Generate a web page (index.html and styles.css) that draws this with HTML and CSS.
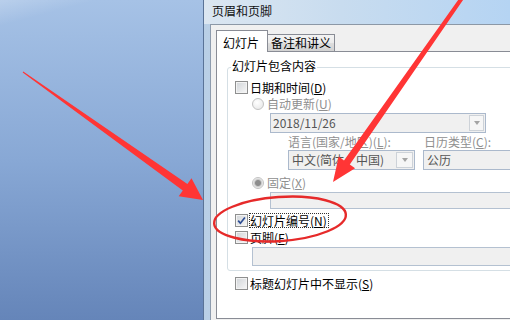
FILE: index.html
```html
<!DOCTYPE html>
<html>
<head>
<meta charset="utf-8">
<title>页眉和页脚</title>
<link rel="stylesheet" href="styles.css">
</head>
<body>
<div class="screen">
  <div class="desk"></div>
  <div class="win">
    <div class="titlebar">页眉和页脚</div>
    <div class="frame">
      <div class="dlg">
        <div class="tabs">
          <div class="tab active">幻灯片</div>
          <div class="tab">备注和讲义</div>
        </div>
        <div class="page">
          <div class="group">
            <span class="cap">幻灯片包含内容</span>
            <div class="row"><span class="cb"></span><span class="lbl">日期和时间(<u>D</u>)</span></div>
            <div class="row ind dis gap1"><span class="rb"></span><span class="lbl rl">自动更新(<u>U</u>)</span></div>
            <div class="combo date gap2"><span class="val">2018/11/26</span><span class="drop"></span></div>
            <div class="grid2 dis gap2 lblrow"><span>语言(国家/地区)(<u>L</u>):</span><span class="c2">日历类型(<u>C</u>):</span></div>
            <div class="grid2 gap1">
              <div class="combo lang"><span class="val">中文(简体，中国)</span><span class="drop wide"></span></div>
              <div class="combo cal"><span class="val">公历</span></div>
            </div>
            <div class="row ind dis gap5"><span class="rb on"></span><span class="lbl rl">固定(<u>X</u>)</span></div>
            <div class="box fixed gap2"></div>
            <div class="row gap4"><span class="cb"><svg width="11" height="11" viewBox="0 0 11 11"><path d="M2.2 5.6 L4.4 8.2 L8.9 2.4" fill="none" stroke="#2d4d94" stroke-width="1.7"/></svg></span><span class="lbl focus">幻灯片编号(<u>N</u>)</span></div>
            <div class="row gap2"><span class="cb"></span><span class="lbl">页脚(<u>F</u>)</span></div>
            <div class="box footer gap2"></div>
          </div>
          <div class="row outer"><span class="cb"></span><span class="lbl">标题幻灯片中不显示(<u>S</u>)</span></div>
        </div>
      </div>
    </div>
  </div>
  <svg class="marks" width="510" height="320" viewBox="0 0 510 320">
    <polygon fill="#ff3535" points="22.7,72.4 182.8,190.6 178.7,196.3 203,200 191.5,178.3 187.4,184.0 23.3,71.6"/>
    <polygon fill="#ff3535" points="463.6,-0.8 349.8,164.4 355.1,168.2 333,182 338.7,156.6 344.0,160.4 460.4,-3.2"/>
    <ellipse cx="280" cy="219" rx="66" ry="22" transform="rotate(-4 280 219)" fill="none" stroke="#e62a2a" stroke-width="2.4"/>
  </svg>
</div>
</body>
</html>
```

FILE: styles.css
```css
* { box-sizing: border-box; margin: 0; padding: 0; }
body {
  margin: 0;
  width: 510px;
  height: 320px;
  overflow: hidden;
  font-family: "Noto Sans CJK SC", "Noto Sans", sans-serif;
  font-size: 12px;
  line-height: 14px;
  color: #000;
}
.screen {
  position: relative;
  display: flex;
  width: 510px;
  height: 320px;
  overflow: hidden;
}
.desk {
  width: 203px;
  flex: none;
  background:
    linear-gradient(165deg, rgba(255,255,255,0.22) 0, rgba(255,255,255,0) 7%),
    linear-gradient(#a6c2e6, #88a8d5 50%, #6585b9);
}
.win {
  flex: 1;
  min-width: 0;
  border-left: 1px solid #5a7397;
  display: flex;
  flex-direction: column;
  overflow: hidden;
}
.titlebar {
  height: 24px;
  flex: none;
  padding: 4px 0 0 8px;
  background: linear-gradient(90deg, #dbe6f1, #c8dcef 45%, #b5d4f3);
  color: #111;
}
.frame {
  flex: 1;
  padding-left: 6px;
  background: linear-gradient(90deg, #b9cfe6, #d6e4f2);
}
.dlg {
  height: 100%;
  width: 400px;
  background: #f0f0f0;
  border-left: 1px solid #8d9bad;
  border-top: 1px solid #8c98a6;
  padding: 5px 0 0 5px;
}
.tabs {
  display: flex;
  align-items: flex-end;
  height: 21px;
  position: relative;
  z-index: 1;
}
.tab {
  height: 17px;
  padding: 1px 3px 0 3px;
  margin-left: -1px;
  border: 1px solid #898c95;
  border-bottom: none;
  background: linear-gradient(#f3f3f3, #ebebeb 50%, #dedede 50%, #d2d2d2);
}
.tab.active {
  height: 22px;
  margin-left: 0;
  margin-bottom: -1px;
  padding: 5px 8px 0 6px;
  background: #fff;
  position: relative;
  z-index: 2;
}
.page {
  width: 380px;
  height: 268px;
  background: #fff;
  border: 1px solid #898c95;
  padding: 15px 0 0 10px;
}
.group {
  position: relative;
  width: 360px;
  border: 1px solid #d5dfe5;
  border-radius: 3px;
  padding: 12px 0 4px 7px;
}
.cap {
  position: absolute;
  top: -9px;
  left: 3px;
  padding: 0 1px;
  background: #fff;
}
.row {
  display: flex;
  align-items: center;
  height: 15px;
}
.gap1 { margin-top: 1px; }
.gap2 { margin-top: 2px; }
.gap4 { margin-top: 4px; }
.gap5 { margin-top: 5px; }
.ind { margin-left: 17px; }
.dis { color: #8f8f8f; }
.cb {
  width: 13px;
  height: 13px;
  flex: none;
  border: 1px solid #8e8f8f;
  background: linear-gradient(135deg, #d0d4d8, #f7f7f7);
  box-shadow: inset 0 0 0 1px #f3f3f3;
}
.cb svg { display: block; }
.lbl { margin-left: 2px; }
.lbl.rl { margin-left: 3px; }
.lbl.focus {
  margin-left: 1px;
  border: 1px dotted #333;
  padding: 0 1px 0 0;
  height: 15px;
  line-height: 13px;
}
.rb {
  width: 12px;
  height: 12px;
  flex: none;
  border-radius: 50%;
  border: 1px solid #c2c2c2;
  background: radial-gradient(circle at 40% 35%, #ffffff, #e4e4e4);
}
.rb.on {
  background: radial-gradient(circle, #8d8d8d 0 2.5px, #c9c9c9 3.5px, #f2f2f2 5px);
}
.combo {
  display: flex;
  align-items: center;
  height: 20px;
  border: 1px solid #abb9cc;
  background: #f0f0f0;
  color: #555;
  overflow: hidden;
  white-space: nowrap;
}
.combo .val { padding-left: 2px; }
.date {
  margin-left: 35px;
  width: 216px;
}
.drop {
  margin-left: auto;
  margin-right: 1px;
  width: 15px;
  height: 16px;
  flex: none;
  border: 1px solid #cdd2d8;
  background: #f6f6f6;
  display: flex;
  align-items: center;
  justify-content: center;
}
.drop.wide { width: 17px; }
.drop::before {
  content: "";
  border-left: 3.5px solid transparent;
  border-right: 3.5px solid transparent;
  border-top: 4px solid #a4a4a4;
}
.grid2 {
  display: grid;
  grid-template-columns: 135px auto;
  margin-left: 53px;
}
.lblrow { height: 14px; }
.lblrow .c2 { padding-left: 1px; }
.lang { width: 127px; }
.lang .val { padding-left: 3px; }
.cal { width: 120px; }
.cal .val { padding-left: 3px; }
.box {
  border: 1px solid #b4c1d1;
  background: #f0f0f0;
}
.fixed {
  margin-left: 35px;
  width: 300px;
  height: 17px;
}
.footer {
  margin-left: 17px;
  width: 320px;
  height: 19px;
}
.outer {
  margin-top: 5px;
  margin-left: 8px;
}
.marks {
  position: absolute;
  left: 0;
  top: 0;
  pointer-events: none;
}
```
